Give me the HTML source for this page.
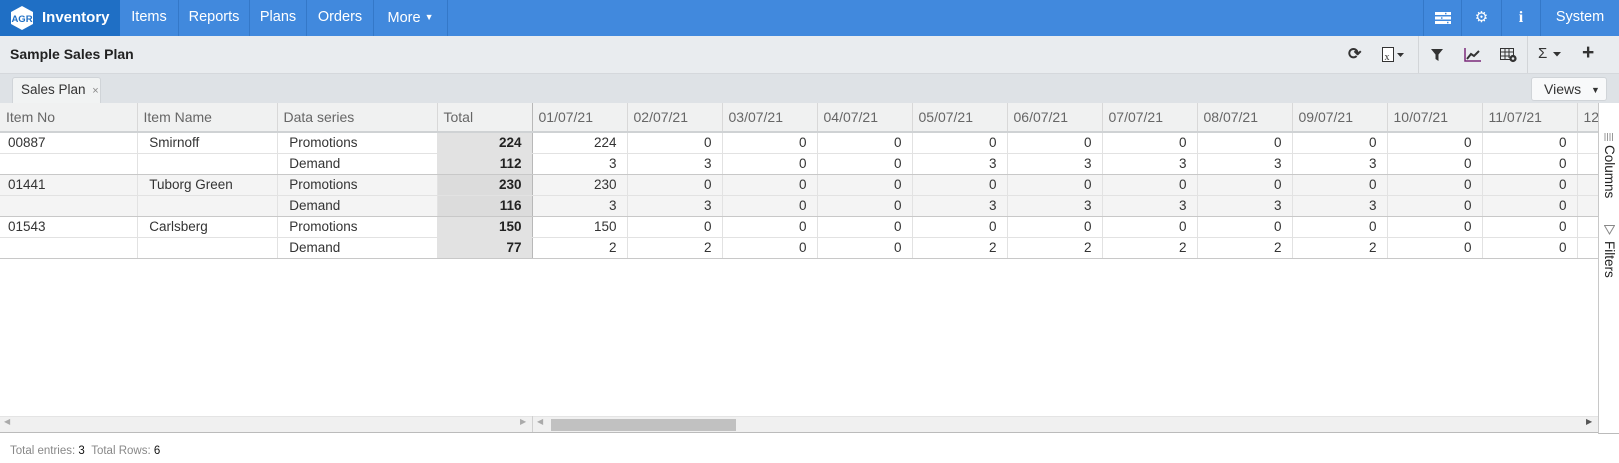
<!DOCTYPE html>
<html><head><meta charset="utf-8">
<style>
*{box-sizing:border-box;margin:0;padding:0}
body{width:1619px;height:463px;overflow:hidden;background:#fff;font-family:"Liberation Sans",sans-serif;font-size:13.5px;color:#333;position:relative}
.nav{position:absolute;left:0;top:0;width:1619px;height:36px;background:#4189dd;color:#fff}
.nav .it{position:absolute;top:0;height:36px;line-height:35px;text-align:center;border-right:1px solid #3478c8;font-size:14.5px}
.brand{position:absolute;left:0;top:0;width:120px;height:36px;background:#1f6fc5}
.tb{position:absolute;left:0;top:36px;width:1619px;height:38px;background:#e9ecef;border-bottom:1px solid #d5d8dc}
.tabs{position:absolute;left:0;top:74px;width:1619px;height:29px;background:#dee2e6}
.grid{position:absolute;left:0;top:103px;width:1598px;height:330px;overflow:hidden;border-bottom:1px solid #bbb}
table{border-collapse:collapse;table-layout:fixed;position:absolute;left:0;top:0;width:1672px}
td,th{height:21px;white-space:nowrap;overflow:hidden;font-weight:normal;border-right:1px solid #e2e2e2;border-bottom:1px solid #e2e2e2;padding:0 8px}
th{height:29px;background:#f0f1f1;color:#666;text-align:left;font-size:14px;padding:0 6px;border-right:1px solid #d8d8d8;border-bottom:2px solid #cfd2d4}
td.n{text-align:right;padding-right:10px}
td.t{background:#e2e2e2;font-weight:bold;text-align:right;padding-right:10px;color:#222}
tr.g td{background:#f4f4f4}tr.g td.t{background:#dcdcdc}
tr.s td{border-bottom:1px solid #c8c8c8}
.pin{border-right:1px solid #b8b8b8!important}
</style></head><body>
<div class="nav">
 <div class="brand">
  <svg style="position:absolute;left:9px;top:5px" width="26" height="26" viewBox="0 0 26 26"><polygon points="13,1 24,7 24,19 13,25 2,19 2,7" fill="#fff"/><text x="13" y="17" font-size="9.5" font-weight="bold" fill="#1f6fc5" text-anchor="middle" font-family="Liberation Sans">AGR</text></svg>
  <span style="position:absolute;left:42px;top:0;line-height:35px;font-weight:bold;font-size:15px">Inventory</span>
 </div>
 <div class="it" style="left:120px;width:59px">Items</div>
 <div class="it" style="left:179px;width:71px">Reports</div>
 <div class="it" style="left:250px;width:57px">Plans</div>
 <div class="it" style="left:307px;width:67px">Orders</div>
 <div class="it" style="left:374px;width:74px">More <span style="font-size:9px;vertical-align:2px">▼</span></div>
 <div class="it" style="left:1423px;width:39px;border-left:1px solid #3478c8"><svg width="16" height="12" viewBox="0 0 16 12" style="margin-top:12px"><rect x="0" y="0" width="16" height="3" fill="#fff"/><rect x="0" y="4.5" width="16" height="3" fill="#fff"/><rect x="0" y="9" width="16" height="3" fill="#fff"/><rect x="10" y="0.8" width="1.5" height="1.5" fill="#4189dd"/><rect x="6" y="5.3" width="1.5" height="1.5" fill="#4189dd"/><rect x="12" y="9.8" width="1.5" height="1.5" fill="#4189dd"/></svg></div>
 <div class="it" style="left:1462px;width:40px"><span style="font-size:15px">⚙</span></div>
 <div class="it" style="left:1502px;width:39px;font-weight:bold;font-family:'Liberation Serif',serif;font-size:16px">i</div>
 <div class="it" style="left:1541px;width:78px;border-right:none">System</div>
</div>
<div class="tb">
 <span style="position:absolute;left:10px;top:0;line-height:36px;font-weight:bold;font-size:14px;color:#222">Sample Sales Plan</span>
 <span style="position:absolute;left:1348px;top:8px;font-size:16px;font-weight:bold;color:#333">⟳</span>
 <svg style="position:absolute;left:1382px;top:11px" width="24" height="16"><rect x="0.5" y="0.5" width="11" height="14" fill="#fff" stroke="#333"/><text x="2.5" y="13" font-size="10" fill="#333" font-family="Liberation Serif">x</text><polygon points="15,6 22,6 18.5,10" fill="#333"/></svg>
 <div style="position:absolute;left:1418px;top:0;width:1px;height:37px;background:#d2d5d8"></div>
 <svg style="position:absolute;left:1431px;top:13px" width="12" height="12"><polygon points="0,0 12,0 7.5,5.5 7.5,12 4.5,10 4.5,5.5" fill="#333"/></svg>
 <svg style="position:absolute;left:1464px;top:12px" width="17" height="14"><path d="M1 0V13H17" stroke="#7a2a7a" stroke-width="1.5" fill="none"/><path d="M3 11L7 6L10 8L15 3" stroke="#333" stroke-width="2" fill="none"/></svg>
 <svg style="position:absolute;left:1500px;top:12px" width="18" height="15"><rect x="0.5" y="0.5" width="13" height="11" fill="none" stroke="#333"/><path d="M0 4H14M0 8H10M5 0V12M9 0V10" stroke="#333"/><circle cx="13" cy="10.5" r="3.6" fill="#333"/><circle cx="13" cy="10.5" r="1.3" fill="#e9ecef"/></svg>
 <div style="position:absolute;left:1527px;top:0;width:1px;height:37px;background:#d2d5d8"></div>
 <span style="position:absolute;left:1538px;top:9px;font-size:15px;color:#333">Σ</span>
 <svg style="position:absolute;left:1553px;top:16px" width="8" height="5"><polygon points="0,0 8,0 4,4.5" fill="#333"/></svg>
 <span style="position:absolute;left:1582px;top:5px;font-size:21px;font-weight:bold;color:#333">+</span>
</div>
<div class="tabs">
 <div style="position:absolute;left:12px;top:3px;width:89px;height:26px;background:#f1f3f3;border:1px solid #d0d4d8;border-bottom:none;border-radius:3px 3px 0 0;line-height:24px;padding-left:8px;font-size:13.5px;color:#333">Sales Plan <span style="color:#888;font-size:11px;margin-left:3px">×</span></div>
 <div style="position:absolute;left:1531px;top:3px;width:76px;height:24px;background:#f8f9fa;border:1px solid #d0d4d8;border-radius:3px;line-height:22px;padding-left:12px;font-size:14px;color:#333">Views <span style="font-size:9px;margin-left:6px;vertical-align:1px">▼</span></div>
</div>
<div class="grid">
<table>
<colgroup><col style="width:137px"><col style="width:140px"><col style="width:160px"><col style="width:95px"><col style="width:95px"><col style="width:95px"><col style="width:95px"><col style="width:95px"><col style="width:95px"><col style="width:95px"><col style="width:95px"><col style="width:95px"><col style="width:95px"><col style="width:95px"><col style="width:95px"><col style="width:95px"></colgroup>
<tr><th>Item No</th><th>Item Name</th><th>Data series</th><th class="pin">Total</th><th>01/07/21</th><th>02/07/21</th><th>03/07/21</th><th>04/07/21</th><th>05/07/21</th><th>06/07/21</th><th>07/07/21</th><th>08/07/21</th><th>09/07/21</th><th>10/07/21</th><th>11/07/21</th><th>12/07/21</th></tr>
<tr><td>00887</td><td>&nbsp;Smirnoff</td><td>&nbsp;Promotions</td><td class="t pin">224</td><td class="n">224</td><td class="n">0</td><td class="n">0</td><td class="n">0</td><td class="n">0</td><td class="n">0</td><td class="n">0</td><td class="n">0</td><td class="n">0</td><td class="n">0</td><td class="n">0</td><td class="n">0</td></tr>
<tr class="s"><td></td><td></td><td>&nbsp;Demand</td><td class="t pin">112</td><td class="n">3</td><td class="n">3</td><td class="n">0</td><td class="n">0</td><td class="n">3</td><td class="n">3</td><td class="n">3</td><td class="n">3</td><td class="n">3</td><td class="n">0</td><td class="n">0</td><td class="n">0</td></tr>
<tr class="g"><td>01441</td><td>&nbsp;Tuborg Green</td><td>&nbsp;Promotions</td><td class="t pin">230</td><td class="n">230</td><td class="n">0</td><td class="n">0</td><td class="n">0</td><td class="n">0</td><td class="n">0</td><td class="n">0</td><td class="n">0</td><td class="n">0</td><td class="n">0</td><td class="n">0</td><td class="n">0</td></tr>
<tr class="g s"><td></td><td></td><td>&nbsp;Demand</td><td class="t pin">116</td><td class="n">3</td><td class="n">3</td><td class="n">0</td><td class="n">0</td><td class="n">3</td><td class="n">3</td><td class="n">3</td><td class="n">3</td><td class="n">3</td><td class="n">0</td><td class="n">0</td><td class="n">0</td></tr>
<tr><td>01543</td><td>&nbsp;Carlsberg</td><td>&nbsp;Promotions</td><td class="t pin">150</td><td class="n">150</td><td class="n">0</td><td class="n">0</td><td class="n">0</td><td class="n">0</td><td class="n">0</td><td class="n">0</td><td class="n">0</td><td class="n">0</td><td class="n">0</td><td class="n">0</td><td class="n">0</td></tr>
<tr class="s"><td></td><td></td><td>&nbsp;Demand</td><td class="t pin">77</td><td class="n">2</td><td class="n">2</td><td class="n">0</td><td class="n">0</td><td class="n">2</td><td class="n">2</td><td class="n">2</td><td class="n">2</td><td class="n">2</td><td class="n">0</td><td class="n">0</td><td class="n">0</td></tr>
</table>
<div style="position:absolute;left:0;top:313px;width:1598px;height:17px;background:#f0f0f0;border-top:1px solid #e4e4e4"></div>
<div style="position:absolute;left:532px;top:313px;width:1px;height:17px;background:#d0d0d0"></div>
<div style="position:absolute;left:551px;top:316px;width:185px;height:12px;background:#c1c1c1"></div>
<span style="position:absolute;left:4px;top:314px;font-size:8px;color:#aaa">◀</span>
<span style="position:absolute;left:520px;top:314px;font-size:8px;color:#aaa">▶</span>
<span style="position:absolute;left:537px;top:314px;font-size:8px;color:#aaa">◀</span>
<span style="position:absolute;left:1586px;top:314px;font-size:8px;color:#555">▶</span>
</div>
<div style="position:absolute;left:1598px;top:103px;width:21px;height:331px;background:#fff;border-left:1px solid #c8c8c8;border-bottom:1px solid #bbb">
 <svg style="position:absolute;left:5px;top:30px" width="10" height="8"><path d="M1 0V8M3.5 0V8M6 0V8M8.5 0V8" stroke="#999"/></svg>
 <div style="position:absolute;left:3px;top:42px;writing-mode:vertical-rl;font-size:13.5px;color:#222">Columns</div>
 <svg style="position:absolute;left:5px;top:122px" width="11" height="10"><polygon points="0.5,0.5 10.5,0.5 5.5,9" fill="none" stroke="#888"/></svg>
 <div style="position:absolute;left:3px;top:138px;writing-mode:vertical-rl;font-size:13.5px;color:#222">Filters</div>
</div>
<div style="position:absolute;left:10px;top:445px;font-size:11.5px;color:#888">Total entries: <span style="color:#111">3</span>&nbsp;&nbsp;Total Rows: <span style="color:#111">6</span></div>
</body></html>
